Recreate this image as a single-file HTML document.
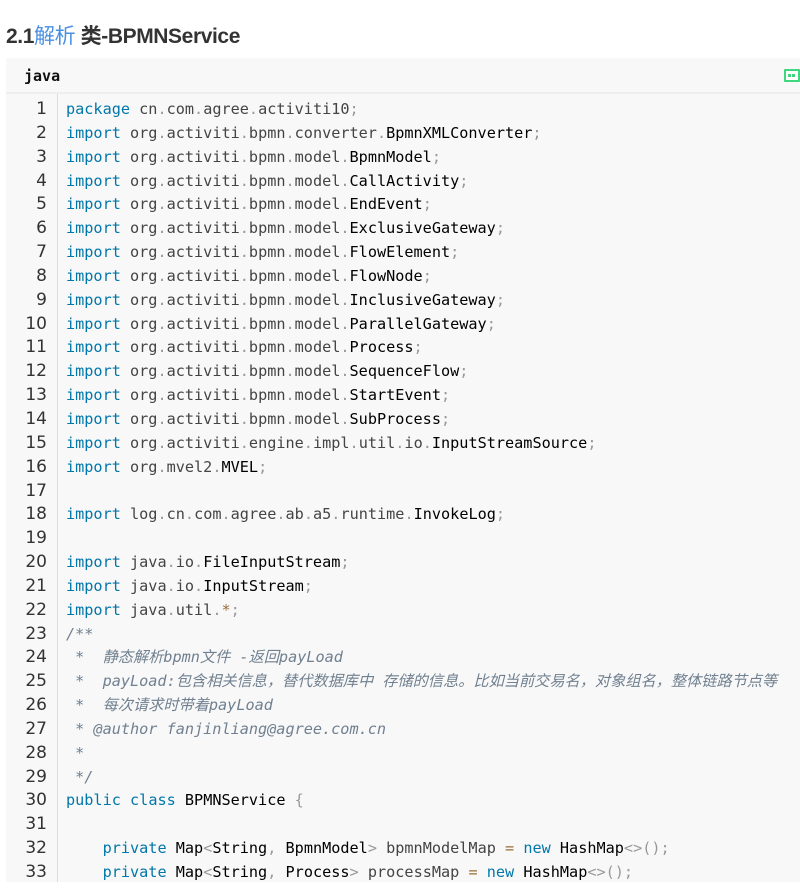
<!DOCTYPE html>
<html><head><meta charset="utf-8"><style>
body{margin:0;background:#fff;width:800px;height:895px;overflow:hidden;font-family:"Liberation Sans","Noto Sans CJK SC",sans-serif}
h2{position:absolute;left:6px;top:22px;margin:0;font-size:21px;font-weight:bold;color:#333;line-height:30px;letter-spacing:-0.4px}
h2 .b{color:#4a90e2;font-weight:normal}
.blk{position:absolute;left:6px;top:58px;width:800px;height:824px;background:#f8f8f8;overflow:hidden}
.hd{height:34px;border-bottom:2px solid #eee;font-family:"DejaVu Sans Mono",monospace;font-weight:bold;font-size:15px;line-height:36px;padding-left:18px;color:#111}
.cp{position:absolute;right:6px;top:11px;width:12px;height:9px;border:2px solid #3ed67f;border-radius:1px;background:#fff}
.cp:before{content:"";position:absolute;left:2px;top:3px;width:3px;height:3px;background:#3ed67f;box-shadow:4px 0 #3ed67f}
.gut{position:absolute;left:0;top:36px;width:51px;border-right:1px solid #ddd;height:800px}
pre{margin:0;font-family:"DejaVu Sans Mono","Noto Sans CJK SC",monospace;font-size:15.2px;line-height:23.85px}
.gut pre{text-align:right;padding-right:10px;padding-top:4px;color:#333;font-family:"DejaVu Sans",sans-serif;font-size:17px}
.code{position:absolute;left:60px;top:40px;white-space:pre;color:#444}
.k{color:#07a}.p{color:#999}.c{color:#708090;font-style:italic}.t{color:#000}.o{color:#9a6e3a}
</style></head><body>
<h2>2.1<span class="b">解析</span> 类-BPMNService</h2>
<div class="blk">
<div class="hd">java</div><div class="cp"></div>
<div class="gut"><pre>1
2
3
4
5
6
7
8
9
10
11
12
13
14
15
16
17
18
19
20
21
22
23
24
25
26
27
28
29
30
31
32
33</pre></div>
<pre class="code"><span class="k">package</span> cn<span class="p">.</span>com<span class="p">.</span>agree<span class="p">.</span>activiti10<span class="p">;</span>
<span class="k">import</span> org<span class="p">.</span>activiti<span class="p">.</span>bpmn<span class="p">.</span>converter<span class="p">.</span><span class="t">BpmnXMLConverter</span><span class="p">;</span>
<span class="k">import</span> org<span class="p">.</span>activiti<span class="p">.</span>bpmn<span class="p">.</span>model<span class="p">.</span><span class="t">BpmnModel</span><span class="p">;</span>
<span class="k">import</span> org<span class="p">.</span>activiti<span class="p">.</span>bpmn<span class="p">.</span>model<span class="p">.</span><span class="t">CallActivity</span><span class="p">;</span>
<span class="k">import</span> org<span class="p">.</span>activiti<span class="p">.</span>bpmn<span class="p">.</span>model<span class="p">.</span><span class="t">EndEvent</span><span class="p">;</span>
<span class="k">import</span> org<span class="p">.</span>activiti<span class="p">.</span>bpmn<span class="p">.</span>model<span class="p">.</span><span class="t">ExclusiveGateway</span><span class="p">;</span>
<span class="k">import</span> org<span class="p">.</span>activiti<span class="p">.</span>bpmn<span class="p">.</span>model<span class="p">.</span><span class="t">FlowElement</span><span class="p">;</span>
<span class="k">import</span> org<span class="p">.</span>activiti<span class="p">.</span>bpmn<span class="p">.</span>model<span class="p">.</span><span class="t">FlowNode</span><span class="p">;</span>
<span class="k">import</span> org<span class="p">.</span>activiti<span class="p">.</span>bpmn<span class="p">.</span>model<span class="p">.</span><span class="t">InclusiveGateway</span><span class="p">;</span>
<span class="k">import</span> org<span class="p">.</span>activiti<span class="p">.</span>bpmn<span class="p">.</span>model<span class="p">.</span><span class="t">ParallelGateway</span><span class="p">;</span>
<span class="k">import</span> org<span class="p">.</span>activiti<span class="p">.</span>bpmn<span class="p">.</span>model<span class="p">.</span><span class="t">Process</span><span class="p">;</span>
<span class="k">import</span> org<span class="p">.</span>activiti<span class="p">.</span>bpmn<span class="p">.</span>model<span class="p">.</span><span class="t">SequenceFlow</span><span class="p">;</span>
<span class="k">import</span> org<span class="p">.</span>activiti<span class="p">.</span>bpmn<span class="p">.</span>model<span class="p">.</span><span class="t">StartEvent</span><span class="p">;</span>
<span class="k">import</span> org<span class="p">.</span>activiti<span class="p">.</span>bpmn<span class="p">.</span>model<span class="p">.</span><span class="t">SubProcess</span><span class="p">;</span>
<span class="k">import</span> org<span class="p">.</span>activiti<span class="p">.</span>engine<span class="p">.</span>impl<span class="p">.</span>util<span class="p">.</span>io<span class="p">.</span><span class="t">InputStreamSource</span><span class="p">;</span>
<span class="k">import</span> org<span class="p">.</span>mvel2<span class="p">.</span><span class="t">MVEL</span><span class="p">;</span>

<span class="k">import</span> log<span class="p">.</span>cn<span class="p">.</span>com<span class="p">.</span>agree<span class="p">.</span>ab<span class="p">.</span>a5<span class="p">.</span>runtime<span class="p">.</span><span class="t">InvokeLog</span><span class="p">;</span>

<span class="k">import</span> java<span class="p">.</span>io<span class="p">.</span><span class="t">FileInputStream</span><span class="p">;</span>
<span class="k">import</span> java<span class="p">.</span>io<span class="p">.</span><span class="t">InputStream</span><span class="p">;</span>
<span class="k">import</span> java<span class="p">.</span>util<span class="p">.</span><span class="o">*</span><span class="p">;</span>
<span class="c">/**
 *  静态解析bpmn文件 -返回payLoad
 *  payLoad:包含相关信息，替代数据库中 存储的信息。比如当前交易名，对象组名，整体链路节点等
 *  每次请求时带着payLoad
 * @author fanjinliang@agree.com.cn
 *
 */</span>
<span class="k">public</span> <span class="k">class</span> <span class="t">BPMNService</span> <span class="p">{</span>

    <span class="k">private</span> <span class="t">Map</span><span class="p">&lt;</span><span class="t">String</span><span class="p">,</span> <span class="t">BpmnModel</span><span class="p">&gt;</span> bpmnModelMap <span class="o">=</span> <span class="k">new</span> <span class="t">HashMap</span><span class="p">&lt;&gt;();</span>
    <span class="k">private</span> <span class="t">Map</span><span class="p">&lt;</span><span class="t">String</span><span class="p">,</span> <span class="t">Process</span><span class="p">&gt;</span> processMap <span class="o">=</span> <span class="k">new</span> <span class="t">HashMap</span><span class="p">&lt;&gt;();</span></pre>
</div>
</body></html>
